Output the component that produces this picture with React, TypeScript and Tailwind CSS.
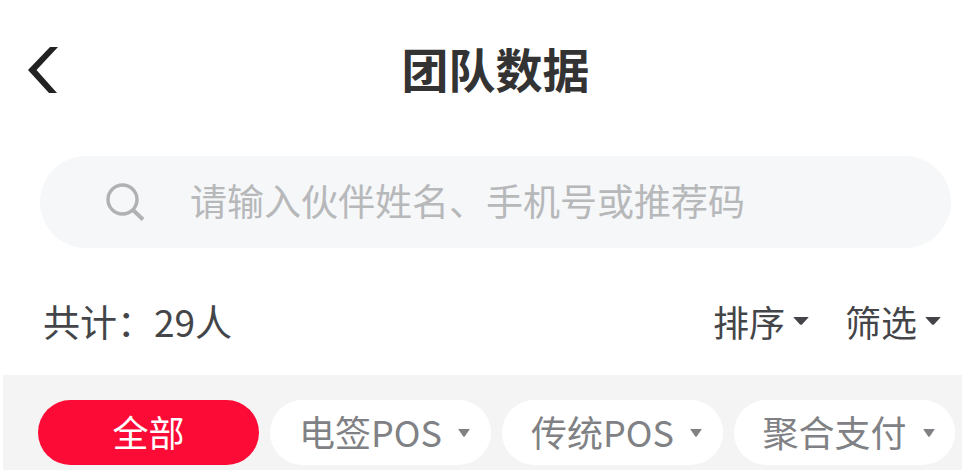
import { useState } from 'react';
import clsx from 'clsx';

const sorters = ['排序', '筛选'];

const categories = [
  { id: 'all', label: '全部', hasMenu: false },
  { id: 'esign', label: '电签POS', hasMenu: true },
  { id: 'classic', label: '传统POS', hasMenu: true },
  { id: 'aggregate', label: '聚合支付', hasMenu: true },
];

const Caret = ({ className }: { className: string }) => (
  <svg viewBox="0 0 16 9" preserveAspectRatio="none" className={className} aria-hidden="true">
    <path d="M1 0h14q1 0 .4.7L9 8.300q-1 1-2 0L.6.7Q0 0 1 0z" fill="currentColor" />
  </svg>
);

const Header = () => (
  <header className="flex h-[140px] items-center pl-7 pr-8">
    <button type="button" aria-label="返回" className="shrink-0 text-[#222222]">
      <svg viewBox="0 0 30 46" className="h-[46px] w-[30px]" aria-hidden="true">
        <path d="M22 0h8L8.500 23 29 46h-8L0 23z" fill="currentColor" />
      </svg>
    </button>
    <h1 className="flex-1 pb-1 text-center text-[47px] leading-[60px] font-bold text-[#333333]">团队数据</h1>
  </header>
);

const SearchBar = () => (
  <label className="mt-4 ml-10 mr-[14px] flex h-[92px] items-center rounded-full bg-[#f5f7f9] pl-[66px] pr-10">
    <svg viewBox="0 0 40 40" className="size-10 shrink-0" fill="none" stroke="#b0b1b3" strokeWidth="3.400" aria-hidden="true">
      <circle cx="16.500" cy="17.500" r="14.500" />
      <path d="M27 28l10 9.500" strokeWidth="4" />
    </svg>
    <input
      type="search"
      aria-label="搜索伙伴"
      placeholder="请输入伙伴姓名、手机号或推荐码"
      className="ml-11 h-full min-w-0 flex-1 bg-transparent pb-1 text-[37px] text-[#333333] outline-none placeholder:text-[#b7b8ba]"
    />
  </label>
);

export default function App() {
  const [active, setActive] = useState('all');

  return (
    <main className="overflow-hidden bg-white font-['Noto_Sans_CJK_SC',sans-serif]">
      <Header />
      <SearchBar />

      <div className="flex items-center justify-between pt-12 pr-6 pb-[29px] pl-[43px] text-[37px] leading-[50px] text-[#444549]">
        <p>共计：29人</p>
        <div className="flex gap-9 text-[36px]">
          {sorters.map((label) => (
            <button key={label} type="button" aria-haspopup="menu" className="flex items-center gap-2">
              {label}
              <Caret className="h-2 w-4" />
            </button>
          ))}
        </div>
      </div>

      <nav className="mx-[3px] grid grid-cols-4 gap-[11px] bg-[#f4f4f4] pt-[25px] pr-[7px] pb-[5px] pl-[35px]">
        {categories.map(({ id, label, hasMenu }) => (
          <button
            key={id}
            type="button"
            aria-pressed={active === id}
            aria-haspopup={hasMenu ? 'menu' : undefined}
            onClick={() => setActive(id)}
            className={clsx(
              'flex h-[65px] min-w-0 items-center justify-center gap-4 rounded-full pb-1 text-[36px] whitespace-nowrap',
              active === id ? 'bg-[#fb0b35] text-white' : 'bg-white text-[#808184]',
              hasMenu && 'pl-2'
            )}
          >
            {label}
            {hasMenu && <Caret className="mt-1 h-2 w-3 shrink-0" />}
          </button>
        ))}
      </nav>
    </main>
  );
}
